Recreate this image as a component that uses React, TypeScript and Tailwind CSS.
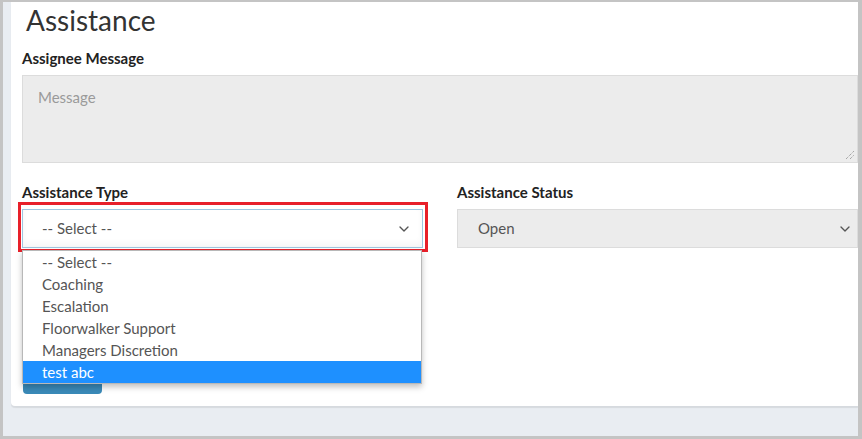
import { ChevronDown } from 'lucide-react';

const OPTIONS = [
	'-- Select --',
	'Coaching',
	'Escalation',
	'Floorwalker Support',
	'Managers Discretion',
	'test abc',
];

export default function App() {
	return (
		<div
			className="flex h-[439px] w-[862px] overflow-hidden border-b-[3px] border-l-[3px] border-r-4 border-t-2 border-[#c4c4c4] bg-[#e9edf2] pl-2 text-[#333]"
			style={{ fontFamily: 'Lato, "Liberation Sans", sans-serif' }}
		>
			<div className="relative h-[404px] flex-1 overflow-hidden rounded-bl bg-white pl-[11px] shadow-[0_2px_1px_rgba(0,0,0,0.08)]">
				<h1 className="ml-[4px] text-[28px] leading-[36px] text-[#333]">
					Assistance
				</h1>

				{/* Message */}
				<label className="mt-[10px] block text-[15px] font-bold leading-[20px] text-[#222]">
					Assignee Message
				</label>
				<div className="relative mt-[7px] h-[88px] w-full border border-[#dcdcdc] bg-[#ececec] px-[15px] py-[10px] text-[15px] text-[#9a9a9a]">
					Message
					<svg
						className="absolute bottom-[2px] right-[2px]"
						width="10"
						height="10"
						viewBox="0 0 10 10"
					>
						<path
							d="M1 9 L9 1 M5 9 L9 5"
							stroke="#888"
							strokeWidth="1"
							strokeDasharray="1 1"
						/>
					</svg>
				</div>

				{/* Selects */}
				<div className="mt-[19px] grid grid-cols-[401px_1fr] gap-x-[34px]">
					<div>
						<label className="block text-[15px] font-bold leading-[20px] text-[#222]">
							Assistance Type
						</label>
						<div className="relative mt-[7px]">
							<div className="flex h-[39px] items-center justify-between border border-[#9fc6e0] bg-white pl-[19px] pr-[10px] text-[15px] text-[#555] shadow-[inset_0_-4px_6px_rgba(0,0,0,0.04)]">
								<span>-- Select --</span>
								<ChevronDown size={16} strokeWidth={2} className="text-[#555]" />
							</div>
							<div className="pointer-events-none absolute -left-[4px] -right-[5px] -top-[7px] -bottom-[4px] border-[3px] border-[#e8202a]" />
							<div className="absolute left-0 top-[41px] z-10 w-[400px] border border-[#b8b8b8] bg-white shadow-[0_3px_6px_rgba(0,0,0,0.25)]">
								{OPTIONS.map((opt, i) => (
									<div
										key={opt}
										className={
											i === OPTIONS.length - 1
												? 'h-[22px] bg-[#1e90ff] pl-[19px] text-[15px] leading-[22px] text-white'
												: 'h-[22px] pl-[19px] text-[15px] leading-[22px] text-[#555]'
										}
									>
										{opt}
									</div>
								))}
							</div>
						</div>
						<div className="ml-[1px] mt-[110px] h-[36px] w-[79px] rounded bg-[#3a8ab8]" />
					</div>
					<div>
						<label className="block text-[15px] font-bold leading-[20px] text-[#222]">
							Assistance Status
						</label>
						<div className="mt-[7px] flex h-[39px] items-center justify-between border border-[#dcdcdc] bg-[#ececec] pl-[20px] pr-[4px] text-[15px] text-[#555]">
							<span>Open</span>
							<ChevronDown size={16} strokeWidth={2} className="text-[#555]" />
						</div>
					</div>
				</div>
			</div>
		</div>
	);
}
